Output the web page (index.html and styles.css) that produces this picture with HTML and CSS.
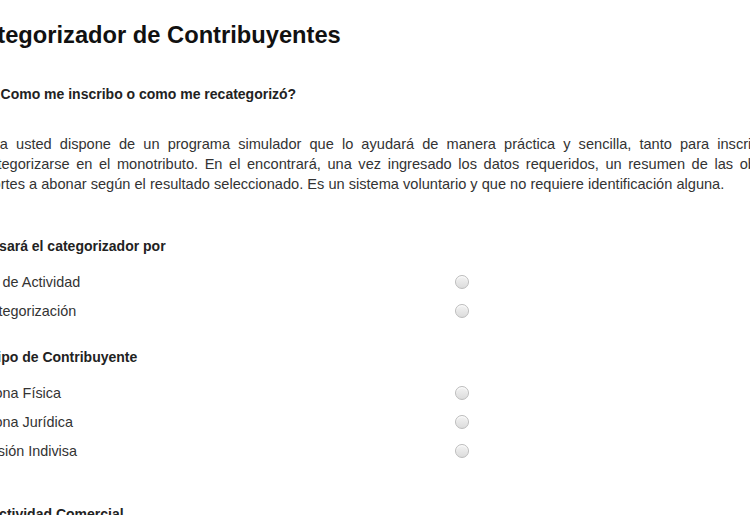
FILE: index.html
```html
<!DOCTYPE html>
<html lang="es">
<head>
    <meta charset="UTF-8">
    <meta name="viewport" content="width=device-width, initial-scale=1.0">
    <title>Categorizador de Contribuyentes</title>
    <link rel="stylesheet" href="styles.css">
</head>
<body>
    <div class="page">
        <h1 class="title">Categorizador de Contribuyentes</h1>

        <h2 class="question">¿Como me inscribo o como me recategorizó?</h2>
        <p class="intro">
            <span class="line">Ahora usted dispone de un programa simulador que lo ayudará de manera práctica y sencilla, tanto para inscribirse como para</span>
            <span class="line">recategorizarse en el monotributo. En el encontrará, una vez ingresado los datos requeridos, un resumen de las obligaciones, y los</span>
            <span class="line line-last">importes a abonar según el resultado seleccionado. Es un sistema voluntario y que no requiere identificación alguna.</span>
        </p>

        <form class="form">
            <div class="group">
                <h3 class="group-title">Usará el categorizador por</h3>
                <label class="option"><span>Inicio de Actividad</span><input type="radio" name="uso"></label>
                <label class="option"><span>Recategorización</span><input type="radio" name="uso"></label>
            </div>

            <div class="group">
                <h3 class="group-title">Tipo de Contribuyente</h3>
                <label class="option"><span>Persona Física</span><input type="radio" name="tipo"></label>
                <label class="option"><span>Persona Jurídica</span><input type="radio" name="tipo"></label>
                <label class="option"><span>Sucesión Indivisa</span><input type="radio" name="tipo"></label>
            </div>

            <div class="group group-last">
                <h3 class="group-title">Actividad Comercial</h3>
            </div>
        </form>
    </div>
</body>
</html>
```

FILE: styles.css
```css
body {
    font-family: "Liberation Sans", Arial, sans-serif;
    background: #fff;
    color: #333;
    margin: 0;
    padding: 0;
    overflow: hidden;
}

/* la página se ve recortada a la izquierda */
.page {
    margin-left: -35px;
    width: 900px;
    padding-top: 21px;
}

.title {
    font-size: 23.7px;
    line-height: 28px;
    font-weight: bold;
    color: #111;
    margin: 0;
    padding-left: 2px;
}

.question {
    font-size: 14px;
    line-height: 16px;
    font-weight: bold;
    color: #222;
    margin: 37px 0 0;
    padding-left: 27px;
}

.intro {
    width: 895px;
    font-size: 14.6px;
    line-height: 20px;
    margin: 32px 0 0;
    padding-left: 4px;
}

.line {
    display: block;
    text-align: justify;
    text-align-last: justify;
}

.line-last {
    text-align-last: left;
}

.form {
    margin-top: 42px;
}

.group {
    margin-bottom: 22px;
}

.group-last {
    margin-top: 39px;
}

.group-title {
    font-size: 14px;
    line-height: 20px;
    font-weight: bold;
    color: #222;
    margin: 0 0 11px;
    padding-left: 24px;
}

.option {
    display: grid;
    grid-template-columns: 490px 14px;
    align-items: center;
    height: 29px;
    font-size: 14.4px;
}

.option input {
    -webkit-appearance: none;
    appearance: none;
    width: 14px;
    height: 14px;
    margin: 0;
    border-radius: 50%;
    border: 1px solid #bcbcbc;
    background: linear-gradient(#f3f3f3, #dcdcdc);
    box-shadow: inset 0 1px 1px #fff;
}
```
